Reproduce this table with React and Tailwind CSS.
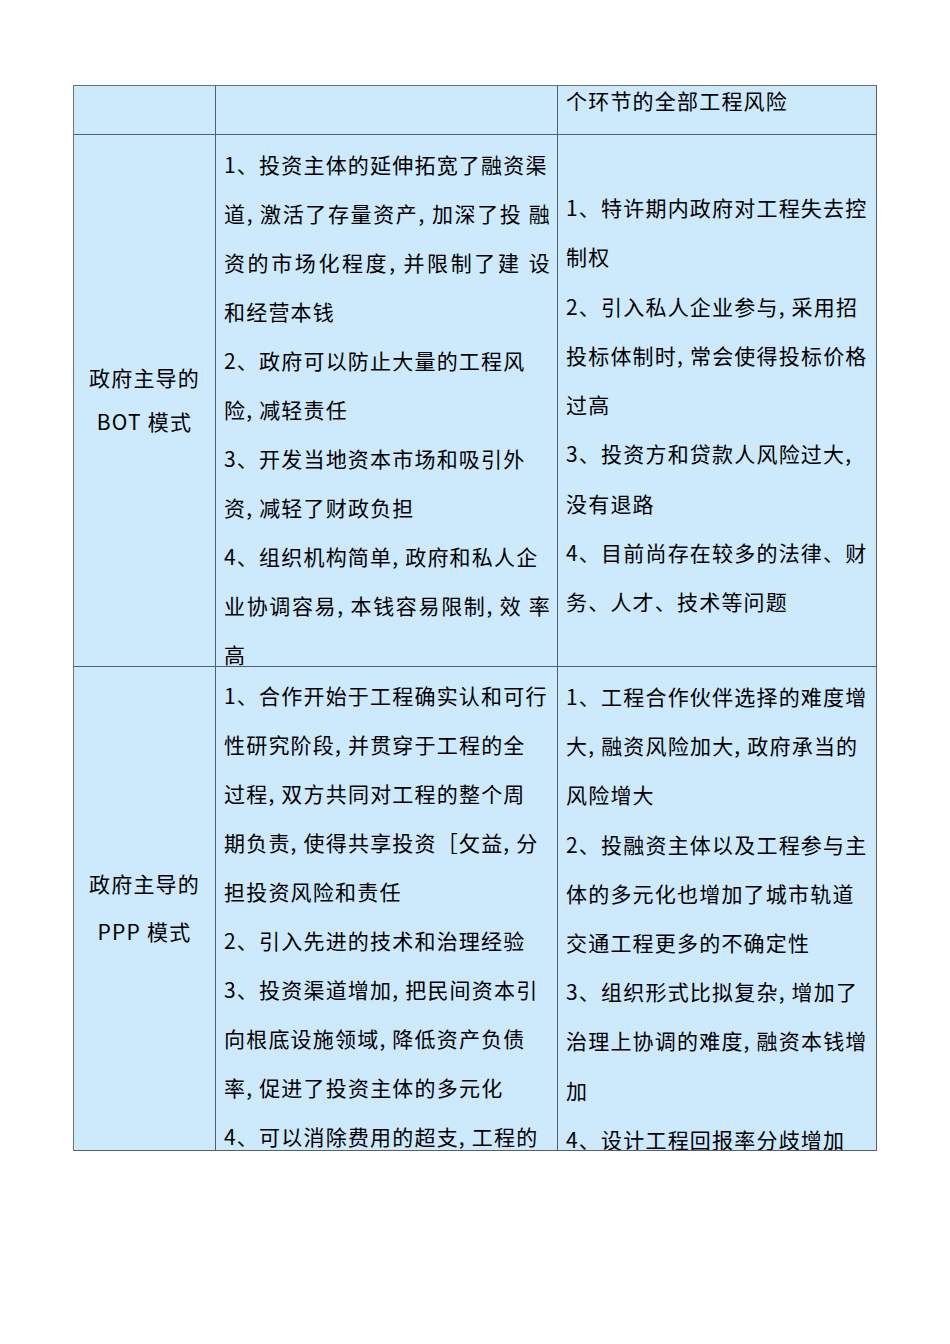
import React from 'react';

const font = { fontFamily: '"Noto Sans CJK SC", "Noto Sans", sans-serif' };

// each entry is one visual line; j = stretch to full width
const bot = [
  { t: '1、投资主体的延伸拓宽了融资渠' },
  { t: '道, 激活了存量资产, 加深了投 融', j: true },
  { t: '资的市场化程度, 并限制了建 设', j: true },
  { t: '和经营本钱' },
  { t: '2、政府可以防止大量的工程风' },
  { t: '险, 减轻责任' },
  { t: '3、开发当地资本市场和吸引外' },
  { t: '资, 减轻了财政负担' },
  { t: '4、组织机构简单, 政府和私人企' },
  { t: '业协调容易, 本钱容易限制, 效 率', j: true },
  { t: '高', last: true },
];

const botRisk = [
  '1、特许期内政府对工程失去控',
  '制权',
  '2、引入私人企业参与, 采用招',
  '投标体制时, 常会使得投标价格',
  '过高',
  '3、投资方和贷款人风险过大,',
  '没有退路',
  '4、目前尚存在较多的法律、财',
  '务、人才、技术等问题',
];

const ppp = [
  '1、合作开始于工程确实认和可行',
  '性研究阶段, 并贯穿于工程的全',
  '过程, 双方共同对工程的整个周',
  '期负责, 使得共享投资［攵益, 分',
  '担投资风险和责任',
  '2、引入先进的技术和治理经验',
  '3、投资渠道增加, 把民间资本引',
  '向根底设施领域, 降低资产负债',
  '率, 促进了投资主体的多元化',
  '4、可以消除费用的超支, 工程的',
];

const pppRisk = [
  '1、工程合作伙伴选择的难度增',
  '大, 融资风险加大, 政府承当的',
  '风险增大',
  '2、投融资主体以及工程参与主',
  '体的多元化也增加了城市轨道',
  '交通工程更多的不确定性',
  '3、组织形式比拟复杂, 增加了',
  '治理上协调的难度, 融资本钱增',
  '加',
  '4、设计工程回报率分歧增加',
];

const Cell = ({ className = '', children }) => (
  <div className={`border-r border-b border-[#56606b] ${className}`}>{children}</div>
);

const Lines = ({ items, className = '' }) => (
  <div className={className}>
    {items.map((l, i) => {
      const item = typeof l === 'string' ? { t: l } : l;
      return (
        <div
          key={i}
          className={`whitespace-nowrap ${item.j ? '[text-align-last:justify] pr-[6px]' : ''} ${item.last ? 'leading-[32px] pt-[8px]' : ''}`}
        >
          {item.t}
        </div>
      );
    })}
  </div>
);

export default function App() {
  return (
    <div className="min-h-[1344px] bg-white pt-[85px] pl-[73px]" style={font}>
      <div className="grid grid-cols-[142px_342px_319px] grid-rows-[49px_532px_484px] w-[804px] border-l border-t border-[#6b747d] bg-[#cde9fc] text-[21px] tracking-[1.2px] text-black">
        <Cell />
        <Cell />
        <Cell className="pl-[8px] leading-[28px]">个环节的全部工程风险</Cell>

        <Cell className="flex flex-col items-center justify-center leading-[44px] pb-[3px]">
          <div>政府主导的</div>
          <div>BOT 模式</div>
        </Cell>
        <Cell className="pl-[8px] pt-[5px] leading-[49px]">
          <Lines items={bot} />
        </Cell>
        <Cell className="pl-[8px] pt-[48px] leading-[49.3px]">
          <Lines items={botRisk} />
        </Cell>

        <Cell className="flex flex-col items-center justify-center leading-[48px] pb-[3px]">
          <div>政府主导的</div>
          <div>PPP 模式</div>
        </Cell>
        <Cell className="pl-[8px] pt-[4px] leading-[49px] overflow-hidden">
          <Lines items={ppp} />
        </Cell>
        <Cell className="pl-[8px] pt-[5px] leading-[49.2px] overflow-hidden">
          <Lines items={pppRisk} />
        </Cell>
      </div>
    </div>
  );
}
